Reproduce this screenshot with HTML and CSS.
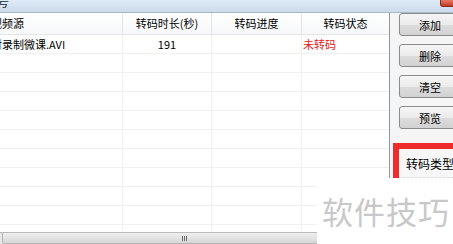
FILE: index.html
```html
<!DOCTYPE html>
<html lang="zh">
<head>
    <meta charset="UTF-8">
    <title>视频转码</title>
    <link rel="stylesheet" href="styles.css">
</head>
<body>
    <div class="window">
        <div class="titlebar">
            <span class="title">号</span>
            <span class="close"></span>
        </div>
        <div class="main">
            <div class="list">
                <div class="row head">
                    <div class="c1"><span class="cut">视频源</span></div>
                    <div class="c2">转码时长(秒)</div>
                    <div class="c3">转码进度</div>
                    <div class="c4">转码状态</div>
                </div>
                <div class="rows">
                    <div class="row">
                        <div class="c1"><span class="cut">对录制微课.AVI</span></div>
                        <div class="c2">191</div>
                        <div class="c3"></div>
                        <div class="c4 status">未转码</div>
                    </div>
                    <div class="row"><div class="c1"></div><div class="c2"></div><div class="c3"></div><div class="c4"></div></div>
                    <div class="row"><div class="c1"></div><div class="c2"></div><div class="c3"></div><div class="c4"></div></div>
                    <div class="row"><div class="c1"></div><div class="c2"></div><div class="c3"></div><div class="c4"></div></div>
                    <div class="row"><div class="c1"></div><div class="c2"></div><div class="c3"></div><div class="c4"></div></div>
                    <div class="row"><div class="c1"></div><div class="c2"></div><div class="c3"></div><div class="c4"></div></div>
                    <div class="row"><div class="c1"></div><div class="c2"></div><div class="c3"></div><div class="c4"></div></div>
                    <div class="row"><div class="c1"></div><div class="c2"></div><div class="c3"></div><div class="c4"></div></div>
                    <div class="row"><div class="c1"></div><div class="c2"></div><div class="c3"></div><div class="c4"></div></div>
                    <div class="row"><div class="c1"></div><div class="c2"></div><div class="c3"></div><div class="c4"></div></div>
                    <div class="row"><div class="c1"></div><div class="c2"></div><div class="c3"></div><div class="c4"></div></div>
                </div>
                <div class="hscroll">
                    <div class="thumb"><span class="grip"></span></div>
                </div>
            </div>
            <div class="side">
                <button class="btn">添加</button>
                <button class="btn">删除</button>
                <button class="btn">清空</button>
                <button class="btn">预览</button>
                <div class="group">
                    <div class="group-label">转码类型</div>
                    <div class="combo"></div>
                </div>
            </div>
        </div>
        <div class="watermark">软件技巧</div>
    </div>
</body>
</html>
```

FILE: styles.css
```css
body {
    margin: 0;
    background-color: #fff;
    font-family: "Noto Sans CJK SC", "DejaVu Sans", sans-serif;
    font-size: 11px;
    color: #000;
}
.window {
    position: relative;
    width: 453px;
    height: 244px;
    overflow: hidden;
    display: flex;
    flex-direction: column;
}
.titlebar {
    height: 12px;
    border-bottom: 1px solid #a9b8ca;
    background: linear-gradient(#dfe9f5, #cbdbed);
    display: flex;
    justify-content: space-between;
    align-items: flex-start;
    overflow: hidden;
}
.title {
    margin-left: -3px;
    margin-top: -5px;
    font-size: 12px;
    line-height: 14px;
    color: #1e2a3a;
}
.close {
    width: 12px;
    height: 6px;
    margin-right: -1px;
    background: linear-gradient(#e27a66, #c43a24);
    border: 1px solid #8a2a1c;
    border-top: none;
    border-radius: 0 0 2px 3px;
}
.main {
    flex: 1;
    display: flex;
    min-height: 0;
}
.list {
    width: 389px;
    border-right: 1px solid #8e97a2;
    display: flex;
    flex-direction: column;
    background-color: #fff;
}
.row {
    display: grid;
    grid-template-columns: 123px 89px 90px 87px;
    height: 19px;
    flex-shrink: 0;
}
.row > div {
    border-right: 1px solid #f0f0f0;
    border-bottom: 1px solid #f0f0f0;
    line-height: 18px;
    white-space: nowrap;
    overflow: hidden;
}
.row > .c4 {
    border-right: none;
}
.head {
    height: 22px;
}
.head > div {
    line-height: 21px;
    text-align: center;
    border-right: 1px solid #e3e3e3;
    border-bottom: 1px solid #e5e5e5;
    background: linear-gradient(#ffffff, #f7f8fa);
}
.head > .c1 {
    text-align: left;
}
.cut {
    margin-left: -9px;
}
.c2 {
    text-align: center;
}
.status {
    color: #e41b1b;
    padding-left: 1px;
}
.rows {
    flex: 1;
    overflow: hidden;
}
.hscroll {
    height: 11px;
    border-top: 1px solid #b9b9b9;
    background-color: #e8e8e8;
    padding-left: 2px;
    display: flex;
}
.thumb {
    width: 362px;
    height: 10px;
    border: 1px solid #b4b4b4;
    border-top: none;
    border-radius: 0 0 2px 2px;
    background: linear-gradient(#efefef, #d6d6d6);
    display: flex;
    justify-content: center;
    align-items: center;
}
.grip {
    width: 5px;
    height: 5px;
    background: repeating-linear-gradient(90deg, #6a6a6a 0 1px, transparent 1px 2px);
}
.side {
    flex: 1;
    background-color: #f5f5f5;
    padding: 0 0 0 9px;
    display: flex;
    flex-direction: column;
    gap: 8px;
}
.btn {
    width: 62px;
    height: 23px;
    padding: 0;
    border: 1px solid #8b8b8b;
    border-radius: 3px;
    background: linear-gradient(#f5f5f5 0%, #ebebeb 50%, #dcdcdc 51%, #d2d2d2 100%);
    font-family: inherit;
    font-size: 11px;
    color: #000;
    flex-shrink: 0;
}
.group {
    margin: 6px 0 0 -6px;
    border: 6px solid #ee2c2c;
    border-right: none;
    background-color: #f7f7f7;
    padding: 7px 0 0 7px;
    height: 40px;
}
.group-label {
    font-size: 12px;
    line-height: 16px;
}
.combo {
    margin: 5px 0 0 -7px;
    height: 10px;
    background: repeating-linear-gradient(90deg, #dcdcdc 0 2px, #ececec 2px 4px);
}
.watermark {
    position: absolute;
    left: 317px;
    top: 178px;
    right: 0;
    bottom: 0;
    background-color: #fff;
    color: #c8c8c8;
    font-size: 31px;
    line-height: 66px;
    padding-left: 5px;
    letter-spacing: 1px;
    white-space: nowrap;
}
```
